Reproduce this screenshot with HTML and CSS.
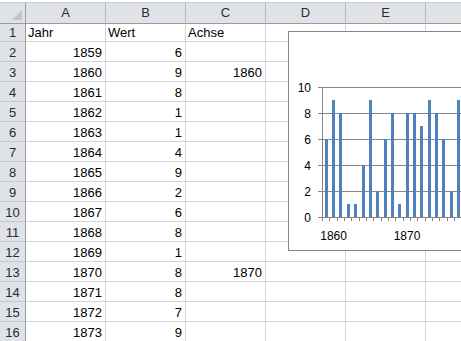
FILE: index.html
```html
<!DOCTYPE html>
<html lang="de">
<head>
    <meta charset="UTF-8">
    <title>Tabelle1</title>
    <link rel="stylesheet" href="styles.css">
</head>
<body>
    <div class="sheet">
        <div class="grid">
            <div class="corner"></div>
            <div class="hd">A</div><div class="hd">B</div><div class="hd">C</div><div class="hd">D</div><div class="hd">E</div><div class="hd"></div>

            <div class="rh">1</div><div class="c">Jahr</div><div class="c">Wert</div><div class="c">Achse</div><div class="c"></div><div class="c"></div><div class="c"></div>
            <div class="rh">2</div><div class="c num">1859</div><div class="c num">6</div><div class="c"></div><div class="c"></div><div class="c"></div><div class="c"></div>
            <div class="rh">3</div><div class="c num">1860</div><div class="c num">9</div><div class="c num">1860</div><div class="c"></div><div class="c"></div><div class="c"></div>
            <div class="rh">4</div><div class="c num">1861</div><div class="c num">8</div><div class="c"></div><div class="c"></div><div class="c"></div><div class="c"></div>
            <div class="rh">5</div><div class="c num">1862</div><div class="c num">1</div><div class="c"></div><div class="c"></div><div class="c"></div><div class="c"></div>
            <div class="rh">6</div><div class="c num">1863</div><div class="c num">1</div><div class="c"></div><div class="c"></div><div class="c"></div><div class="c"></div>
            <div class="rh">7</div><div class="c num">1864</div><div class="c num">4</div><div class="c"></div><div class="c"></div><div class="c"></div><div class="c"></div>
            <div class="rh">8</div><div class="c num">1865</div><div class="c num">9</div><div class="c"></div><div class="c"></div><div class="c"></div><div class="c"></div>
            <div class="rh">9</div><div class="c num">1866</div><div class="c num">2</div><div class="c"></div><div class="c"></div><div class="c"></div><div class="c"></div>
            <div class="rh">10</div><div class="c num">1867</div><div class="c num">6</div><div class="c"></div><div class="c"></div><div class="c"></div><div class="c"></div>
            <div class="rh">11</div><div class="c num">1868</div><div class="c num">8</div><div class="c"></div><div class="c"></div><div class="c"></div><div class="c"></div>
            <div class="rh">12</div><div class="c num">1869</div><div class="c num">1</div><div class="c"></div><div class="c"></div><div class="c"></div><div class="c"></div>
            <div class="rh">13</div><div class="c num">1870</div><div class="c num">8</div><div class="c num">1870</div><div class="c"></div><div class="c"></div><div class="c"></div>
            <div class="rh">14</div><div class="c num">1871</div><div class="c num">8</div><div class="c"></div><div class="c"></div><div class="c"></div><div class="c"></div>
            <div class="rh">15</div><div class="c num">1872</div><div class="c num">7</div><div class="c"></div><div class="c"></div><div class="c"></div><div class="c"></div>
            <div class="rh">16</div><div class="c num">1873</div><div class="c num">9</div><div class="c"></div><div class="c"></div><div class="c"></div><div class="c"></div>
        </div>

        <!-- Diagramm liegt über den Zellen -->
        <div class="chart">
            <svg width="200" height="218" viewBox="0 0 200 218">
                <g class="grid-lines">
                    <line x1="33" y1="55.5" x2="200" y2="55.5"/>
                    <line x1="33" y1="81.5" x2="200" y2="81.5"/>
                    <line x1="33" y1="107.5" x2="200" y2="107.5"/>
                    <line x1="33" y1="133.5" x2="200" y2="133.5"/>
                    <line x1="33" y1="159.5" x2="200" y2="159.5"/>
                </g>
                <g class="bars">
                    <rect x="36" y="107" width="3" height="78"/>
                    <rect x="43" y="68" width="3" height="117"/>
                    <rect x="50" y="81" width="3" height="104"/>
                    <rect x="58" y="172" width="3" height="13"/>
                    <rect x="65" y="172" width="3" height="13"/>
                    <rect x="73" y="133" width="3" height="52"/>
                    <rect x="80" y="68" width="3" height="117"/>
                    <rect x="87" y="159" width="3" height="26"/>
                    <rect x="95" y="107" width="3" height="78"/>
                    <rect x="102" y="81" width="3" height="104"/>
                    <rect x="109" y="172" width="3" height="13"/>
                    <rect x="117" y="81" width="3" height="104"/>
                    <rect x="124" y="81" width="3" height="104"/>
                    <rect x="131" y="94" width="3" height="91"/>
                    <rect x="139" y="68" width="3" height="117"/>
                    <rect x="146" y="81" width="3" height="104"/>
                    <rect x="153" y="107" width="3" height="78"/>
                    <rect x="161" y="159" width="3" height="26"/>
                    <rect x="168" y="68" width="3" height="117"/>
                </g>
                <g class="axis">
                    <line x1="33.5" y1="55" x2="33.5" y2="189"/>
                    <line x1="29" y1="185.5" x2="200" y2="185.5"/>
                    <line x1="29" y1="55.5" x2="33" y2="55.5"/>
                    <line x1="29" y1="81.5" x2="33" y2="81.5"/>
                    <line x1="29" y1="107.5" x2="33" y2="107.5"/>
                    <line x1="29" y1="133.5" x2="33" y2="133.5"/>
                    <line x1="29" y1="159.5" x2="33" y2="159.5"/>
                    <line x1="40.5" y1="185" x2="40.5" y2="189"/>
                    <line x1="48.5" y1="185" x2="48.5" y2="189"/>
                    <line x1="55.5" y1="185" x2="55.5" y2="189"/>
                    <line x1="62.5" y1="185" x2="62.5" y2="189"/>
                    <line x1="70.5" y1="185" x2="70.5" y2="189"/>
                    <line x1="77.5" y1="185" x2="77.5" y2="189"/>
                    <line x1="84.5" y1="185" x2="84.5" y2="189"/>
                    <line x1="92.5" y1="185" x2="92.5" y2="189"/>
                    <line x1="99.5" y1="185" x2="99.5" y2="189"/>
                    <line x1="106.5" y1="185" x2="106.5" y2="189"/>
                    <line x1="114.5" y1="185" x2="114.5" y2="189"/>
                    <line x1="121.5" y1="185" x2="121.5" y2="189"/>
                    <line x1="128.5" y1="185" x2="128.5" y2="189"/>
                    <line x1="136.5" y1="185" x2="136.5" y2="189"/>
                    <line x1="143.5" y1="185" x2="143.5" y2="189"/>
                    <line x1="150.5" y1="185" x2="150.5" y2="189"/>
                    <line x1="158.5" y1="185" x2="158.5" y2="189"/>
                    <line x1="165.5" y1="185" x2="165.5" y2="189"/>
                    <line x1="172.5" y1="185" x2="172.5" y2="189"/>
                    <line x1="180.5" y1="185" x2="180.5" y2="189"/>
                </g>
                <g class="labels">
                    <text x="22" y="59.5" text-anchor="end">10</text>
                    <text x="22" y="85.5" text-anchor="end">8</text>
                    <text x="22" y="111.5" text-anchor="end">6</text>
                    <text x="22" y="137.5" text-anchor="end">4</text>
                    <text x="22" y="163.5" text-anchor="end">2</text>
                    <text x="22" y="189.5" text-anchor="end">0</text>
                    <text x="44.6" y="207.5" text-anchor="middle">1860</text>
                    <text x="118" y="207.5" text-anchor="middle">1870</text>
                </g>
            </svg>
        </div>
    </div>
</body>
</html>
```

FILE: styles.css
```css
body {
    margin: 0;
    background-color: #fff;
    font-family: "Liberation Sans", Arial, sans-serif;
    font-size: 13px;
    overflow: hidden;
}

.sheet {
    position: relative;
    padding-top: 2px;
    width: 461px;
    height: 341px;
    overflow: hidden;
}

.grid {
    display: grid;
    grid-template-columns: 26px repeat(6, 80px);
    grid-auto-rows: 20px;
}

.grid > div {
    box-sizing: border-box;
    white-space: nowrap;
    overflow: hidden;
}

.corner,
.hd {
    position: relative;
    height: 22px;
    background-color: #dfe3e8;
    border-top: 1px solid #c8ccd1;
    border-right: 1px solid #b4b8bd;
    border-bottom: 1px solid #9b9b9b;
    color: #2b2b2b;
    text-align: center;
    line-height: 20px;
}

.grid > .corner,
.grid > .hd {
    overflow: visible;
}

.corner {
    border-right-color: #9b9b9b;
}

.corner::after {
    content: "";
    position: absolute;
    right: 3px;
    bottom: 3px;
    width: 0;
    height: 0;
    border-left: 10px solid transparent;
    border-bottom: 10px solid #c3c7cc;
}

.rh {
    background-color: #dfe3e8;
    border-right: 1px solid #9b9b9b;
    border-bottom: 1px solid #c5c9ce;
    color: #2b2b2b;
    text-align: center;
    padding-top: 2px;
    line-height: 17px;
}

.c {
    border-right: 1px solid #d4d4d4;
    border-bottom: 1px solid #d4d4d4;
    padding: 2px 2px 0 2px;
    line-height: 17px;
    color: #000;
}

.num {
    text-align: right;
    padding-right: 3px;
}

.chart {
    position: absolute;
    left: 288px;
    top: 31px;
    width: 200px;
    height: 220px;
    box-sizing: border-box;
    border: 1px solid #868686;
    background-color: #fff;
}

.chart svg {
    display: block;
}

.grid-lines line,
.axis line {
    stroke: #868686;
    stroke-width: 1;
}

.bars rect {
    fill: #4f81bd;
}

.labels text {
    font-family: "Liberation Sans", Arial, sans-serif;
    font-size: 12px;
    fill: #000;
}
```
